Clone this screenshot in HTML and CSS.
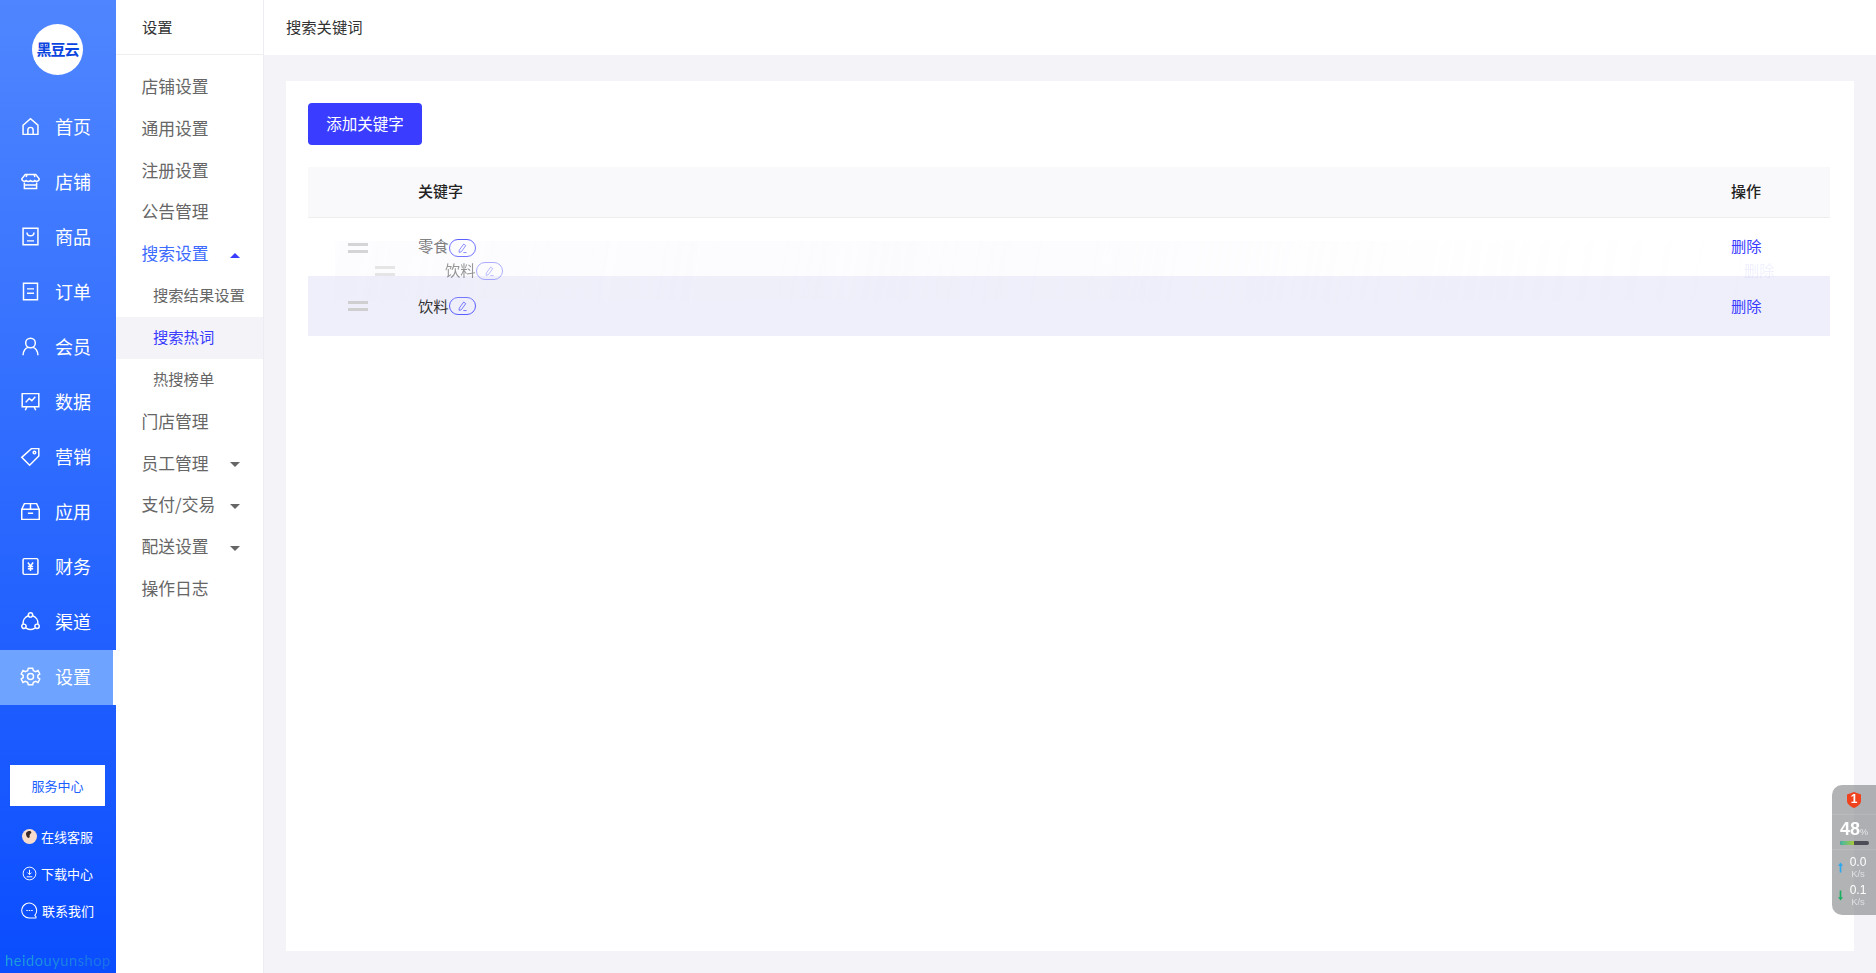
FILE: index.html
```html
<!DOCTYPE html>
<html lang="zh-CN">
<head>
    <meta charset="UTF-8">
    <title>搜索关键词</title>
    <link rel="stylesheet" href="styles.css">
</head>
<body>
    <div class="app">
        <nav class="nav">
            <div class="logo"><span>黑豆云</span></div>
            <ul class="nav-list">
                <li class="nav-item">
                    <svg class="nav-icon" viewBox="0 0 24 24"><path d="M3.500 10.500 12 3l8.500 7.500V21h-17zM9 21v-5a3 3 0 0 1 6 0v5"/></svg>
                    首页
                </li>
                <li class="nav-item">
                    <svg class="nav-icon" viewBox="0 0 24 24"><path d="M6 4h12l4 5a3 3 0 0 1-5 2 3.500 3.500 0 0 1-5 0 3.500 3.500 0 0 1-5 0 3 3 0 0 1-5-2zM5 13v7h14v-7M5 16h14M8 4l-1 3M16 4l1 3"/></svg>
                    店铺
                </li>
                <li class="nav-item">
                    <svg class="nav-icon" viewBox="0 0 24 24"><path d="M3.500 2.500h17v19h-17zM8 7.500c0 5 8 5 8 0M8 17h8"/></svg>
                    商品
                </li>
                <li class="nav-item">
                    <svg class="nav-icon" viewBox="0 0 24 24"><path d="M4 2.500h16v19H4zM8 9h8M8 14h8"/></svg>
                    订单
                </li>
                <li class="nav-item">
                    <svg class="nav-icon" viewBox="0 0 24 24"><circle cx="12" cy="8" r="5.500"/><path d="M3.500 22c0-5 3-8.500 5.500-9M20.500 22c0-5-3-8.500-5.500-9"/></svg>
                    会员
                </li>
                <li class="nav-item">
                    <svg class="nav-icon" viewBox="0 0 24 24"><path d="M2.500 3h19v15h-19zM6.500 13l4-4.500 3 2.500 4-4.500M8 18l-2 4M16 18l2 4"/></svg>
                    数据
                </li>
                <li class="nav-item">
                    <svg class="nav-icon" viewBox="0 0 24 24"><path d="M13 3h8.500v8.500L11 22l-9-9z"/><circle cx="16.500" cy="7.500" r="1.500"/></svg>
                    营销
                </li>
                <li class="nav-item">
                    <svg class="nav-icon" viewBox="0 0 24 24"><path d="M2 9.500 5 3h14l3 6.500V21H2zM2 9.500h20M12 3v6.500M9 14h6"/></svg>
                    应用
                </li>
                <li class="nav-item">
                    <svg class="nav-icon" viewBox="0 0 24 24"><path d="M5 3h14a1.500 1.500 0 0 1 1.500 1.500v15A1.500 1.500 0 0 1 19 21H5a1.500 1.500 0 0 1-1.500-1.500v-15A1.500 1.500 0 0 1 5 3zM9 7.500l3 4 3-4M12 11.500V17M9 12h6M9 14.500h6"/></svg>
                    财务
                </li>
                <li class="nav-item">
                    <svg class="nav-icon" viewBox="0 0 24 24"><circle cx="12" cy="4.500" r="2.500"/><circle cx="4.500" cy="17.500" r="2.500"/><circle cx="19.500" cy="17.500" r="2.500"/><path d="M9.500 5.500a9 9 0 0 0-6 9.500M14.500 5.500a9 9 0 0 1 6 9.500M7 19.500a9 9 0 0 0 10 0"/></svg>
                    渠道
                </li>
                <li class="nav-item nav-item-active">
                    <svg class="nav-icon" viewBox="0 0 24 24"><path d="M9.500 2.500h5l.8 2.800 2.700 1.100 2.600-1.300 2 4-2.200 1.700v2.400l2.200 1.700-2 4-2.600-1.300-2.700 1.100-.8 2.800h-5l-.8-2.800-2.700-1.100-2.600 1.300-2-4 2.200-1.700v-2.400L1.400 9.100l2-4 2.600 1.300 2.700-1.100z"/><circle cx="12" cy="12" r="3.500"/></svg>
                    设置
                </li>
            </ul>
            <div class="nav-bottom">
                <a class="service-btn">服务中心</a>
                <div class="help-item">
                    <svg class="help-icon" viewBox="0 0 16 16"><circle class="avatar-bg" cx="8" cy="8" r="8"/><path class="avatar-hair" d="M4.500 4c1.500-2.500 5-2.500 5.500-.5.200 1.200-1.500 1.500-1.800 3-.2 1.500.3 2.500-.7 3C6 10 3.500 6.500 4.500 4z"/></svg>
                    在线客服
                </div>
                <div class="help-item">
                    <svg class="help-icon" viewBox="0 0 16 16"><circle cx="8" cy="8" r="6.800"/><path d="M8 4v5M5.800 7 8 9.200 10.200 7M5 11.500h6"/></svg>
                    下载中心
                </div>
                <div class="help-item">
                    <svg class="help-icon help-icon-big" viewBox="0 0 16 16"><path d="M14.500 14.500 13 12.600A7 7 0 1 0 8 15h6.500"/><path d="M5 8h6" stroke-dasharray="1.400 .9"/></svg>
                    联系我们
                </div>
                <div class="brand">heidouyunshop</div>
            </div>
        </nav>

        <aside class="side">
            <div class="side-title">设置</div>
            <ul class="side-list">
                <li class="side-item">店铺设置</li>
                <li class="side-item">通用设置</li>
                <li class="side-item">注册设置</li>
                <li class="side-item">公告管理</li>
                <li class="side-item side-item-open">搜索设置<i class="arrow arrow-up"></i></li>
                <li class="side-sub">搜索结果设置</li>
                <li class="side-sub side-sub-active">搜索热词</li>
                <li class="side-sub">热搜榜单</li>
                <li class="side-item">门店管理</li>
                <li class="side-item">员工管理<i class="arrow"></i></li>
                <li class="side-item">支付/交易<i class="arrow"></i></li>
                <li class="side-item">配送设置<i class="arrow"></i></li>
                <li class="side-item">操作日志</li>
            </ul>
        </aside>

        <div class="page">
            <header class="topbar">搜索关键词</header>
            <main class="main">
                <div class="card">
                    <button class="add-btn">添加关键字</button>
                    <div class="table">
                        <div class="row row-head">
                            <div class="col-handle"></div>
                            <div class="col-name">关键字</div>
                            <div class="col-action">操作</div>
                        </div>
                        <div class="row row-one">
                            <div class="col-handle"><i class="handle"></i></div>
                            <div class="col-name">零食<span class="edit-pill"><svg viewBox="0 0 16 16"><path d="M9.500 2.500 12 4.500 6.500 12 3.800 12.800 4 10zM9 13h4"/></svg></span></div>
                            <div class="col-action"><a class="link">删除</a></div>
                        </div>
                        <div class="row row-two">
                            <div class="col-handle"><i class="handle"></i></div>
                            <div class="col-name">饮料<span class="edit-pill"><svg viewBox="0 0 16 16"><path d="M9.500 2.500 12 4.500 6.500 12 3.800 12.800 4 10zM9 13h4"/></svg></span></div>
                            <div class="col-action"><a class="link">删除</a></div>
                        </div>
                        <!-- row being dragged -->
                        <div class="row drag-row">
                            <div class="col-handle"><i class="handle"></i></div>
                            <div class="col-name">饮料<span class="edit-pill"><svg viewBox="0 0 16 16"><path d="M9.500 2.500 12 4.500 6.500 12 3.800 12.800 4 10zM9 13h4"/></svg></span></div>
                            <div class="col-action"><a class="link">删除</a></div>
                        </div>
                    </div>
                </div>
            </main>
        </div>
    </div>

    <div class="monitor">
        <div class="monitor-top">
            <svg class="shield" viewBox="0 0 14 16"><path d="M7 0 14 2.500V9c0 3-3.500 5.500-7 7-3.500-1.500-7-4-7-7V2.500z"/></svg>
            <span class="shield-num">1</span>
        </div>
        <div class="monitor-mid">
            <div class="percent">48<small>%</small></div>
            <div class="bar"><div class="bar-fill" style="width:47%"></div></div>
        </div>
        <div class="monitor-net">
            <div class="net-row">
                <svg class="net-arrow" viewBox="0 0 6 12"><path class="net-up" d="M3 0 6 4H4v8H2V4H0z"/></svg>
                <div class="net-text">0.0<small>K/s</small></div>
            </div>
            <div class="net-row">
                <svg class="net-arrow" viewBox="0 0 6 12"><path class="net-down" d="M3 12 6 8H4V0H2v8H0z"/></svg>
                <div class="net-text">0.1<small>K/s</small></div>
            </div>
        </div>
    </div>
</body>
</html>
```

FILE: styles.css
```css
* {
    box-sizing: border-box;
}
html, body {
    margin: 0;
    height: 100%;
}
body {
    font-family: "Noto Sans CJK SC", "Noto Sans", sans-serif;
    background: #f3f3f8;
    color: #333;
    overflow: hidden;
}
ul {
    list-style: none;
    margin: 0;
    padding: 0;
}
.app {
    display: flex;
    height: 973px;
}

/* left blue nav */
.nav {
    width: 116px;
    flex: none;
    display: flex;
    flex-direction: column;
    background: linear-gradient(180deg, #4f86ff 0%, #0a4dff 100%);
    color: #fff;
}
.logo {
    width: 51px;
    height: 51px;
    margin: 24px 0 25px 32px;
    padding-bottom: 2px;
    border-radius: 50%;
    background: #fff;
    display: flex;
    align-items: center;
    justify-content: center;
    color: #0b45e0;
    font-size: 15px;
    font-weight: 700;
    letter-spacing: -1px;
}
.nav-item {
    height: 55px;
    display: flex;
    align-items: center;
    padding: 0 0 3px 20px;
    font-size: 18px;
    gap: 14px;
}
.nav-item-active {
    background: #6ea3ff;
    border-right: 3px solid #fff;
}
.nav-icon {
    width: 21px;
    height: 21px;
    flex: none;
    fill: none;
    stroke: #fff;
    stroke-width: 1.7;
}
.nav-bottom {
    margin-top: auto;
    display: flex;
    flex-direction: column;
}
.service-btn {
    display: flex;
    align-items: center;
    justify-content: center;
    width: 95px;
    height: 41px;
    margin: 0 0 12px 10px;
    background: #fff;
    color: #1a5fff;
    font-size: 13px;
}
.help-item {
    height: 37px;
    display: flex;
    align-items: center;
    padding-left: 22px;
    gap: 4px;
    font-size: 13px;
}
.help-icon {
    width: 15px;
    height: 15px;
    flex: none;
    fill: none;
    stroke: #fff;
    stroke-width: 1;
}
.help-icon-big {
    width: 17px;
    height: 17px;
    margin-left: -1px;
}
.avatar-bg {
    fill: #f7dccd;
    stroke: none;
}
.avatar-hair {
    fill: #3a2a2a;
    stroke: none;
}
.brand {
    margin-top: 23px;
    height: 21px;
    padding-left: 5px;
    font-family: "Lato", sans-serif;
    font-size: 14.700px;
    line-height: 16px;
    letter-spacing: .5px;
    white-space: nowrap;
    background: linear-gradient(90deg, #1ca6d6, #1a6ce8);
    -webkit-background-clip: text;
    background-clip: text;
    color: transparent;
}

/* second column */
.side {
    width: 148px;
    flex: none;
    background: #fff;
    border-right: 1px solid #ececf2;
}
.side-title {
    height: 55px;
    line-height: 52px;
    padding-left: 26px;
    font-size: 15.3px;
    color: #333;
    border-bottom: 1px solid #eeeeee;
}
.side-list {
    padding-top: 11px;
}
.side-item, .side-sub {
    height: 41.85px;
    display: flex;
    align-items: center;
    padding-bottom: 2px;
    font-size: 16.8px;
    color: #666;
    padding-left: 25.500px;
    position: relative;
}
.side-item-open {
    color: #3d6bff;
}
.side-sub {
    font-size: 15.3px;
    padding-left: 37px;
    padding-bottom: 4px;
}
.side-sub-active {
    background: #f3f3f8;
    color: #3a3dff;
}
.arrow {
    margin-left: auto;
    margin-right: 23px;
    width: 0;
    height: 0;
    border-left: 5px solid transparent;
    border-right: 5px solid transparent;
    border-top: 5px solid #666;
    transform: translateY(2px);
}
.arrow-up {
    border-top: 0;
    border-bottom: 5px solid #3a3dff;
}

/* right side */
.page {
    flex: 1;
    display: flex;
    flex-direction: column;
    min-width: 0;
}
.topbar {
    height: 55px;
    line-height: 52px;
    padding-left: 22px;
    background: #fff;
    font-size: 15.3px;
    flex: none;
}
.main {
    flex: 1;
    padding: 26px 22px 22px 22px;
    min-height: 0;
}
.card {
    height: 100%;
    background: #fff;
    padding: 22px 24px 22px 22px;
}
.add-btn {
    display: block;
    width: 114px;
    height: 42px;
    margin-bottom: 22px;
    padding: 0 0 2px;
    background: #3a3dff;
    color: #fff;
    border: none;
    border-radius: 4px;
    font-family: inherit;
    font-size: 15.5px;
}
.table {
    position: relative;
    font-size: 15.3px;
}
.row {
    display: flex;
    align-items: center;
    padding-bottom: 3px;
}
.row-head {
    height: 51px;
    background: #f9f9fb;
    border-bottom: 1px solid #eeeeee;
    font-weight: 500;
    color: #222;
    font-size: 15px;
}
.row-one {
    height: 58px;
    padding-bottom: 5px;
    color: #666;
}
.row-two {
    height: 60px;
    background: #efeffb;
}
.col-handle {
    width: 110px;
    flex: none;
    padding-left: 40px;
}
.col-name {
    flex: 1;
    display: flex;
    align-items: center;
}
.col-action {
    width: 99px;
    flex: none;
}
.handle {
    display: block;
    width: 20px;
    height: 10px;
    margin-top: 3px;
    border-top: 3px solid #cfcfcf;
    border-bottom: 3px solid #cfcfcf;
}
.link {
    color: #3a3dff;
}
.edit-pill {
    width: 27px;
    height: 18px;
    margin-top: 3px;
    border: 1px solid #5a5dff;
    border-radius: 9px;
    display: flex;
    align-items: center;
    justify-content: center;
}
.row-one .handle, .row-one .edit-pill {
    margin-top: 7px;
}
.edit-pill svg {
    width: 13px;
    height: 13px;
    fill: none;
    stroke: #5a5dff;
    stroke-width: 1;
}
.drag-row {
    position: absolute;
    left: 27px;
    top: 74px;
    width: calc(100% - 14px);
    height: 60px;
    padding-bottom: 5px;
    color: #333;
    background: linear-gradient(100deg, rgba(239,239,251,.3) 0%, rgba(239,239,251,.55) 50%, rgba(239,239,251,0) 95%);
    -webkit-mask-image: linear-gradient(100deg, rgba(0,0,0,.55) 0%, rgba(0,0,0,.35) 50%, rgba(0,0,0,.04) 100%);
    mask-image: linear-gradient(100deg, rgba(0,0,0,.55) 0%, rgba(0,0,0,.35) 50%, rgba(0,0,0,.04) 100%);
}
.drag-row .handle, .drag-row .edit-pill {
    margin-top: 5px;
}

/* floating net monitor, sits over the page */
.monitor {
    position: fixed;
    right: 0;
    top: 785px;
    width: 44px;
    height: 130px;
    border-radius: 10px 0 0 10px;
    background: rgba(130,132,136,.62);
    color: #fff;
    display: flex;
    flex-direction: column;
    align-items: center;
}
.monitor-top {
    height: 30px;
    width: 100%;
    position: relative;
    display: flex;
    justify-content: center;
    padding-top: 7px;
    border-bottom: 1px solid rgba(255,255,255,.1);
}
.shield {
    width: 14px;
    height: 16px;
    fill: #f0421c;
}
.shield-num {
    position: absolute;
    top: 7px;
    left: 0;
    width: 100%;
    text-align: center;
    font-family: "Liberation Sans", sans-serif;
    font-size: 12px;
    font-weight: 700;
}
.monitor-mid {
    height: 35px;
    width: 100%;
    padding: 6px 7px 0 8px;
    border-bottom: 1px solid rgba(255,255,255,.1);
    font-family: "Liberation Sans", sans-serif;
}
.percent {
    font-size: 18px;
    line-height: 17px;
    font-weight: 700;
    white-space: nowrap;
}
.percent small {
    font-size: 9px;
    font-weight: 400;
    opacity: .7;
}
.bar {
    height: 4px;
    border-radius: 2px;
    background: #4b4c56;
    overflow: hidden;
}
.bar-fill {
    height: 100%;
    background: linear-gradient(90deg, #3fb8a8, #a8c83c);
}
.monitor-net {
    width: 100%;
    padding: 3px 3px 0 6px;
    font-family: "Liberation Sans", sans-serif;
}
.net-row {
    display: flex;
    align-items: center;
    height: 28px;
}
.net-arrow {
    width: 5px;
    height: 11px;
    flex: none;
}
.net-up {
    fill: #2aa8f0;
}
.net-down {
    fill: #18b060;
}
.net-text {
    flex: 1;
    text-align: center;
    font-size: 12px;
    line-height: 13px;
}
.net-text small {
    display: block;
    font-size: 9.500px;
    line-height: 10px;
    opacity: .6;
}
```
